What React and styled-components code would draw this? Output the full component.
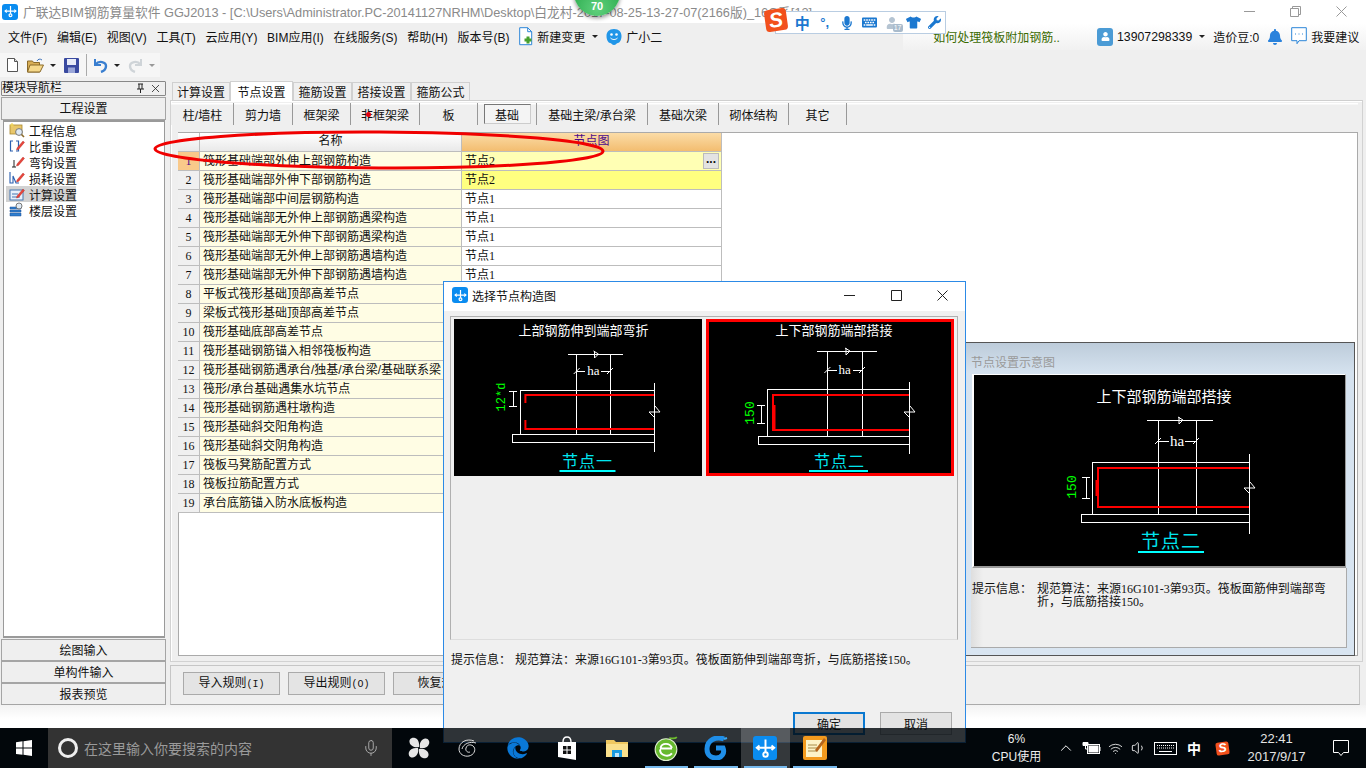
import React from 'react';
import styled, { createGlobalStyle } from 'styled-components';
import { FaMicrophone, FaKeyboard, FaTshirt, FaWrench, FaUser, FaBell, FaEdge } from 'react-icons/fa';
import { ChevronUp, Wifi, Volume1, Mic } from 'lucide-react';

const Global = createGlobalStyle`
  html, body { margin: 0; padding: 0; background: #000; overflow: hidden; }
  * { box-sizing: border-box; }
  body { font: 12px "Liberation Sans", "Noto Sans CJK SC", sans-serif; color: #111; }
`;

const Page = styled.div`
  position: relative; width: 1366px; height: 768px; overflow: hidden;
  display: flex; flex-direction: column; background: #000;
`;

/* ---------- title bar ---------- */
const TitleBar = styled.header`
  height: 23px; background: #fff; display: flex; align-items: center; padding-left: 2px; flex: none;
`;
const TitleText = styled.div`
  margin-left: 5px; color: #8a8a8a; font-size: 12.75px; white-space: nowrap; flex: 1; overflow: hidden;
`;
const WinControl = styled.div`
  width: 46px; height: 23px; display: flex; align-items: center; justify-content: center; flex: none;
  color: ${p => p.$dark ? '#222' : '#999'};
`;
const AppTile = styled.div`
  width: ${p => p.$s}px; height: ${p => p.$s}px; border-radius: 3px; background: #0a8cf0; flex: none;
  display: flex; align-items: center; justify-content: center;
`;
const AppMark = ({ s = 16 }) => (
  <AppTile $s={s}>
    <svg width={s - 3} height={s - 3} viewBox="0 0 14 14" fill="none" stroke="#fff" strokeWidth="1.3">
      <path d="M7 1v8.500M1.500 6.500h11" />
      <path d="M3 5 1.200 6.500 3 8M11 5l1.800 1.500L11 8" />
      <path d="M7 9.500c-2 0-2 3 0 3s2-3 0-3" />
    </svg>
  </AppTile>
);

/* ---------- menu ---------- */
const MenuBar = styled.nav`
  height: 27px; background: #efefef; display: flex; align-items: center; padding-left: 8px; flex: none;
`;
const MenuItem = styled.span`
  margin-right: ${p => p.$mr ?? 9.7}px; white-space: nowrap; display: inline-flex; align-items: center;
`;
const MenuSpacer = styled.div` flex: 1; `;
const Promo = styled.div`
  width: 187px; height: 27px; display: flex; align-items: center; justify-content: center;
  color: #3a6a00; background: linear-gradient(#fff, #f1f1f1);
`;
const UserArea = styled.div`
  width: 276px; height: 27px; display: flex; align-items: center; padding-left: 7px;
  background: linear-gradient(#fff, #f1f1f1); white-space: nowrap;
`;
const Avatar = styled.div`
  width: 16px; height: 18px; border-radius: 3px; background: #4b9bd5; color: #fff; font-size: 9px;
  display: flex; align-items: center; justify-content: center; margin-right: 4px;
`;
const Phone = styled.span` font-size: 12.3px; `;
const Caret = styled.i`
  display: inline-block; width: 0; height: 0; flex: none;
  border-left: ${p => p.$s ?? 3}px solid transparent; border-right: ${p => p.$s ?? 3}px solid transparent;
  border-top: ${p => p.$s ?? 3}px solid ${p => p.$c ?? '#222'};
`;
const Gap = styled.span` display: inline-block; width: ${p => p.$w}px; flex: none; `;

/* ---------- toolbar ---------- */
const Toolbar = styled.div`
  width: 160px; height: 24px; margin-top: 3px; background: #f6f6f6; display: flex; align-items: center;
  padding-left: 2px; flex: none;
`;
const ToolSlot = styled.div`
  width: ${p => p.$w}px; display: flex; justify-content: center; align-items: center; flex: none;
`;
const ToolSep = styled.div` width: 1px; height: 22px; background: #aaa; margin: 0 1.5px; flex: none; `;

/* ---------- workspace ---------- */
const Workspace = styled.div`
  height: 655px; background: #efefef; display: flex; flex-direction: column; flex: none;
`;
const Columns = styled.div`
  flex: 1; display: flex; margin-top: 4px; min-height: 0;
`;
const NavColumn = styled.aside`
  width: 165px; margin-left: 1px; display: flex; flex-direction: column; flex: none;
`;
const NavHeader = styled.div`
  height: 15px; border: 1px solid #888; border-radius: 1px; display: flex; align-items: center; padding: 0 4px 0 0;
  justify-content: space-between; line-height: 13px; font-size: 12px; margin-top: 0; background: #efefef;
`;
const NavButton = styled.div`
  height: ${p => p.$h}px; border: 1px solid #a5a5a5; background: #efefef; display: flex; align-items: center;
  justify-content: center; margin-top: ${p => p.$mt ?? 0}px; flex: none; padding-bottom: 2px;
`;
const TreeBox = styled.ul`
  list-style: none; margin: 0 1px 1px 2px; padding: 0 0 0 2px; flex: 1; background: #fff; border: 2px solid #9a9a9a;
  border-width: 2px 1px 2px 1px;
`;
const TreeRow = styled.li`
  height: 16px; display: flex; align-items: center; width: 70px; white-space: nowrap; gap: 4px; padding-left: 3px;
  background: ${p => p.$on ? '#d2d2d2' : 'transparent'};
`;

const MainColumn = styled.main`
  flex: 1; margin-left: 4px; margin-right: 3px; display: flex; flex-direction: column; min-width: 0;
`;
const Tabs = styled.div` display: flex; height: 19px; margin-left: 2px; align-items: flex-end; flex: none; `;
const Tab = styled.div`
  width: ${p => p.$w}px; height: ${p => p.$on ? 20 : 18}px; display: flex; align-items: center; justify-content: center;
  background: ${p => p.$on ? '#fff' : '#efefef'}; border: 1px solid #d0d0d0; border-bottom: 0; position: relative;
  z-index: ${p => p.$on ? 1 : 0}; margin-bottom: ${p => p.$on ? -1 : 0}px;
`;
const Panel = styled.section`
  flex: 1; border: 1px solid #d2d2d2; border-top-color: #cfcfcf; background: #efefef; display: flex; flex-direction: column;
  padding: 1px 4px 5px 7px; min-height: 0;
  box-shadow: inset 1px 1px 0 #fff;
`;
const SubTabs = styled.div`
  height: 22px; margin: 1px 0 0 -7px; padding-left: 1px; display: flex; flex: none; background: linear-gradient(#fff 0, #fff 1px, #efefef 2px);
`;
const SubTab = styled.div`
  position: relative; width: ${p => p.$w}px; height: 22px; border-right: 1px solid #999; display: flex;
  align-items: center; justify-content: center; flex: none;
`;
const SubTabActive = styled.span`
  width: 47px; height: 20px; display: flex; align-items: center; justify-content: center;
  background: #f4f4f4; border: 1px solid #777; border-right-color: #ccc; border-bottom-color: #ccc;
`;
const RedDot = styled.i`
  position: absolute; left: 15px; top: 9px; width: 5px; height: 5px; border-radius: 50%; background: #e8000b;
`;
const InnerBox = styled.div`
  flex: 1; margin-top: 7px; background: #fff; border: 1px solid #aaa; display: flex; justify-content: space-between;
  padding-right: 1px; min-height: 0;
`;
const Grid = styled.div`
  width: 544px; display: grid; grid-template-columns: 22px 262px 260px; grid-auto-rows: 19px; align-self: flex-start;
  align-content: start; margin-left: -1px;
`;
const Cell = styled.div`
  position: relative; border-right: 1px solid #bdbdbd; border-bottom: 1px solid #bdbdbd; padding: 1px 0 0 3px;
  white-space: nowrap; overflow: hidden; line-height: 17px;
  background: ${p => p.$bg ?? '#fff'}; color: ${p => p.$c ?? '#111'};
`;
const NumCell = styled(Cell)` text-align: center; padding-left: 0; `;
const HeadCell = styled(Cell)`
  text-align: center; padding: 0;
  background: ${p => p.$hot ? 'linear-gradient(#fbdca7, #f3bd70)' : 'linear-gradient(#fff, #e9e9e9)'};
`;
const EllipsisBtn = styled.div`
  position: absolute; right: 2px; top: 1px; width: 16px; height: 16px; background: #e3e3e3; border: 1px solid #bbb;
  display: flex; align-items: center; justify-content: center; font-weight: 700; line-height: 8px; padding-bottom: 5px; color: #111;
`;
const Half = styled.span` font: 12px/1 "Liberation Serif", serif; `;
const Paren = styled.span` font: 10px/1 "Liberation Mono", monospace; `;

const SchemePanel = styled.div`
  width: 391px; height: 314px; align-self: flex-end; margin: 0 1px -1px 0;
  border: 1px solid #555; border-left: 0; padding: 0 8px 0 8px; display: flex; flex-direction: column;
  background: linear-gradient(#bdccda, #d5e2ef 30px, #d9e5f1);
`;
const SchemeTitle = styled.div`
  height: 31px; padding: 10px 0 0 0; color: #9a9a9a; flex: none; margin-left: -1px;
`;
const SchemePic = styled.div`
  width: 374px; height: 194px; background: #000; border: 1px solid #fff; border-left-width: 2px; border-right: 1px solid #999; flex: none;
  margin-left: 0; border-bottom: 2px solid #999; overflow: hidden;
`;
const SchemeInfo = styled.div`
  width: 376px; height: 80px; background: linear-gradient(90deg, #dedede, #efefef 12px); border: 1px solid #aaa;
  border-width: 0 1px 1px 0; margin-left: -1px; display: flex; padding: 15px 0 0 1px; line-height: 13px;
`;
const InfoLabel = styled.span` white-space: nowrap; flex: none; margin-right: ${p => p.$mr}px; `;
const InfoBody = styled.span` width: 296px; word-break: break-all; `;
const InfoInline = styled.div` white-space: nowrap; line-height: 14px; display: flex; `;

const BottomBar = styled.footer`
  height: 40px; margin: 3px 3px 0 0; border: 1px solid #c6c6c6; border-bottom-color: #aaa; flex: none; display: flex;
  align-items: center; gap: 8px; padding: 0 0 4px 12px; background: #efefef;
`;
const RuleButton = styled.div`
  width: 97px; height: 23px; background: #e4e4e4; border: 1px solid #aaa; text-align: center; line-height: 21px;
`;
const Strip = styled.div`
  height: 23px; flex: none; background: linear-gradient(#f2f2f2, #fff 60%);
`;

/* ---------- overlays ---------- */
const Dialog = styled.div`
  position: absolute; left: 443px; top: 281px; width: 523px; height: 462px; z-index: 4; background: #f0f0f0;
  border: 1px solid #2c8ae6; display: flex; flex-direction: column;
`;
const DialogTitle = styled.div`
  height: 29px; background: #fff; display: flex; align-items: center; padding: 0 0 3px 8px; flex: none;
`;
const DialogName = styled.div` flex: 1; margin-left: 4px; `;
const ThumbList = styled.div`
  width: 508px; height: 324px; margin: 5px 0 0 6px; border: 1px solid #b0b0b0; border-bottom-color: #ddd; padding: 2px 0 0 3px;
  display: flex; gap: 4px; align-items: flex-start; flex: none; background: #efefef;
`;
const Thumb = styled.div`
  width: 248px; height: 157px; background: #000; flex: none; outline: ${p => p.$on ? '3px solid #ff0000' : '0'}; outline-offset: -3px;
`;
const DialogInfo = styled.div` margin: 13px 0 0 7px; flex: none; `;
const DialogActions = styled.div` display: flex; justify-content: flex-end; gap: 15px; margin: 45px 13px 0 0; `;
const DialogButton = styled.div`
  width: 72px; height: 23px; background: #e3e3e3; display: flex; align-items: center; justify-content: center;
  border: ${p => p.$primary ? '2px solid #0a78d0' : '1px solid #aaa'};
`;
const Ellipse = styled.svg` position: absolute; left: 150px; top: 126px; z-index: 3; pointer-events: none; `;
const Badge = styled.div`
  position: absolute; left: 574px; top: -30px; width: 46px; height: 46px; border-radius: 50%; z-index: 6;
  background: radial-gradient(circle at 50% 85%, #5fd07c, #27a84a 70%); box-shadow: 0 2px 4px rgba(0,0,0,.45);
  color: #fff; font-weight: 700; font-size: 11px; display: flex; align-items: flex-end; justify-content: center; padding-bottom: 4px;
`;
const ImeBar = styled.div`
  position: absolute; left: 775px; top: 11px; width: 171px; height: 23px; z-index: 6; background: #fff; border: 1px solid #b9cde2;
  display: flex; align-items: center; color: #1b78d0; padding-left: 15px;
`;
const ImeSlot = styled.span`
  width: ${p => p.$w ?? 22.5}px; display: flex; justify-content: center; align-items: center; flex: none; position: relative;
  color: ${p => p.$c ?? '#1b78d0'}; font-weight: ${p => p.$b ? 700 : 400}; font-size: ${p => p.$fs ?? 12}px;
`;
const ImeCount = styled.em`
  position: absolute; right: 1px; bottom: -3px; background: #a9bbcc; color: #fff; font: 7px/8px "Liberation Sans", sans-serif; padding: 0 1px; border-radius: 2px;
`;
const SogouMark = styled.div`
  width: ${p => p.$s}px; height: ${p => p.$s}px; background: #f2501c; border-radius: ${p => p.$s / 6}px; color: #fff;
  transform: rotate(-8deg); font: italic 700 ${p => p.$s * 0.95}px/${p => p.$s}px "Liberation Sans", sans-serif; text-align: center; flex: none;
`;
const ImeLogo = styled.div` position: absolute; left: 765px; top: 9px; z-index: 7; `;

/* ---------- taskbar ---------- */
const Taskbar = styled.div`
  height: 40px; flex: none; position: relative; z-index: 5; display: flex; align-items: center; color: #fff;
  background: rgba(2, 8, 14, .82);
`;
const StartBtn = styled.div` width: 48px; height: 40px; display: flex; align-items: center; justify-content: center; flex: none; `;
const SearchBox = styled.div`
  width: 344px; height: 40px; background: #333; display: flex; align-items: center; padding-left: 10px; color: #9a9a9a; font-size: 14px; flex: none;
`;
const Cortana = styled.i`
  width: 20px; height: 20px; border-radius: 50%; border: 3px solid #eee; margin-right: 6px; flex: none;
`;
const SearchText = styled.span` flex: 1; white-space: nowrap; `;
const MicWrap = styled.span` margin-right: 12px; color: #aaa; display: flex; `;
const AppRow = styled.div` display: flex; margin-left: 2px; flex: none; `;
const AppSlot = styled.div`
  position: relative; width: 49.5px; height: 40px; display: flex; align-items: center; justify-content: center;
  background: ${p => p.$current ? 'rgba(255,255,255,.2)' : 'transparent'};
  &::after {
    content: ''; display: ${p => p.$open ? 'block' : 'none'}; position: absolute; left: 3px; right: 3px; bottom: 0; height: 2px; background: #76b9ed;
  }
`;
const CpuBlock = styled.div`
  width: 70px; margin-left: 142px; text-align: center; line-height: 18px; flex: none; font-size: 12px; color: #eee;
`;
const TrayRow = styled.div` display: flex; align-items: center; margin-left: 1px; height: 40px; flex: none; `;
const TraySlot = styled.div`
  width: ${p => p.$w}px; display: flex; align-items: center; justify-content: center; flex: none; color: #fff;
  font-size: ${p => p.$fs ?? 12}px; font-weight: ${p => p.$b ? 700 : 400};
`;
const Clock = styled.div`
  width: 78px; text-align: center; line-height: 18px; font-size: 13px; color: #e4e4e4; flex: none;
`;

/* ---------- small drawings ---------- */
const Pencil = () => <path d="M8 10 14 3l1.500 1.400-6 7L7.500 12z" fill="#e8453c" stroke="#b02a22" strokeWidth=".4" />;
const I16 = ({ children }) => <svg width="16" height="16" viewBox="0 0 16 16" style={{ flex: 'none' }}>{children}</svg>;

const treeIcons = {
  info: <I16><rect x="1" y="3" width="12" height="9" fill="#e9c76b" stroke="#a8872e" strokeWidth=".8" /><circle cx="10" cy="10" r="3.400" fill="#dfeaf5" stroke="#777" /><path d="m12.500 12.500 2.500 2.500" stroke="#8a6a2a" strokeWidth="1.600" /><path d="M3 1v4M1 3h4" stroke="#f2d65a" strokeWidth="1.200" /></I16>,
  weight: <I16><path d="M4 3H1.500v10H4M7 3h2.500v10H7" fill="none" stroke="#2a5fb0" strokeWidth="1.200" /><Pencil /></I16>,
  hook: <I16><path d="M5 6v7M3 13h4" stroke="#222" strokeWidth="1" fill="none" /><Pencil /></I16>,
  loss: <I16><path d="M1 2v11h3V6l3 7h3" fill="none" stroke="#2a5fb0" strokeWidth="1.100" /><Pencil /></I16>,
  calc: <I16><rect x="1" y="4" width="13" height="10" fill="#e8f0fa" stroke="#4777b0" /><path d="M3 8h6M3 11h8" stroke="#4777b0" /><Pencil /></I16>,
  floor: <I16><path d="M1 5h11v2H1zM1 8h11v2H1zM1 11h11v3H1z" fill="#2f7fd0" stroke="#1e4f90" strokeWidth=".5" /><circle cx="10" cy="4" r="3" fill="#dfeaf5" stroke="#777" /></I16>,
};

const NewDoc = () => <svg width="11" height="14" viewBox="0 0 11 14"><path d="M.5.5h7l3 3v10H.5z" fill="#fff" stroke="#555" /><path d="M7.500.5v3h3" fill="#ddd" stroke="#555" /></svg>;
const OpenFolder = () => <svg width="17" height="15" viewBox="0 0 17 15"><path d="M.5 3h5l1 1.500h6V14H.5z" fill="#d8ae55" stroke="#8a6a2a" /><path d="M3 7h13.500L13 14H.5z" fill="#f5d88a" stroke="#8a6a2a" /><path d="M10 3c1-2 3-2.500 5-1" fill="none" stroke="#3b70b8" /></svg>;
const Floppy = () => <svg width="15" height="15" viewBox="0 0 15 15"><rect width="15" height="15" rx="1" fill="#3a4aa0" /><rect x="3" y="1" width="9" height="6" fill="#e8ecf8" /><rect x="4" y="9.500" width="7" height="5.500" fill="#9aa6d8" /></svg>;
const Undo = ({ c }) => <svg width="15" height="15" viewBox="0 0 15 15" fill="none"><path d="M2 1v6h6" stroke={c} strokeWidth="2" /><path d="M2.500 6.500C6 2 13 4 13 8c0 3-2 5-5 6" stroke={c} strokeWidth="2.400" /></svg>;
const Redo = ({ c }) => <svg width="15" height="15" viewBox="0 0 15 15" fill="none" style={{ transform: 'scaleX(-1)' }}><path d="M2 1v6h6" stroke={c} strokeWidth="2" /><path d="M2.500 6.500C6 2 13 4 13 8c0 3-2 5-5 6" stroke={c} strokeWidth="2.400" /></svg>;
const NewChange = () => <svg width="14" height="19" viewBox="0 0 14 19"><path d="M.7.7h8l4 4v13H.7z" fill="#fff" stroke="#2c86d8" /><path d="M8.700.7v4h4" fill="none" stroke="#2c86d8" /><path d="M9 9.500v7M5.500 13h7" stroke="#47a02e" strokeWidth="3" /></svg>;
const Mascot = () => <svg width="16" height="19" viewBox="0 0 16 19"><path d="M8 2c5 0 7.500 3 7.500 7s-2 7-3.500 7-2 2-4 2-2.500-2-4-2S.5 13 .5 9 3 2 8 2z" fill="#2196e8" /><circle cx="5.500" cy="7.500" r="1.300" fill="#fff" /><circle cx="10.500" cy="7.500" r="1.300" fill="#fff" /><path d="M4.500 11c2 2 5 2 7 0" stroke="#fff" fill="none" /></svg>;
const CommentIcon = () => <svg width="16" height="20" viewBox="0 0 16 20"><path d="M.7.7h14.600v13H8l-2 3v-3H.7z" fill="#fff" stroke="#2c86d8" /><path d="M4 7h1M7.500 7h1M11 7h1" stroke="#2c86d8" /></svg>;
const WindowsLogo = () => <svg width="16" height="16" viewBox="0 0 16 16" fill="#fff"><path d="M0 2.200 6.500 1.300v6.300H0zM7.500 1.200 16 0v7.600H7.500zM0 8.500h6.500v6.300L0 13.900zM7.500 8.500H16V16l-8.500-1.200z" /></svg>;
const Fan = () => <svg width="22" height="22" viewBox="0 0 22 22" fill="#e6e6e6"><path d="M11 10C7 11 2 9 1.500 5 1 1.500 4.500 0 7 1c3.500 1.200 4.500 5 4 9zM12 11c-1-4 1-9 5-9.500C20.500 1 22 4.500 21 7c-1.200 3.500-5 4.500-9 4zM11 12c4-1 9 1 9.500 5 .5 3.500-3 5-5.500 4-3.500-1.200-4.500-5-4-9zM10 11c1 4-1 9-5 9.500C1.500 21 0 17.500 1 15c1.200-3.500 5-4.500 9-4z" /></svg>;
const Swirl = () => <svg width="20" height="20" viewBox="0 0 20 20" fill="none" stroke="#ddd" strokeWidth="1"><path d="M16 3C9 0 1 4 1 11c0 5 5 8 10 7 5-1 7-6 5-9-2-3-7-3-8 1-1 3 2 5 4 4" /><path d="M18 5C12 3 5 6 4 11" /></svg>;
const StoreIcon = () => <svg width="20" height="24" viewBox="0 0 20 24"><path d="M6 6C6 2 8 1 10 1s4 1 4 5" fill="none" stroke="#fff" strokeWidth="1.400" /><path d="M1 6h18v18L1 21z" fill="#fff" /><path d="M6 10h3.500v3.500H6zM10.500 10H14v3.500h-3.500zM6 14.500h3.500V18H6zM10.500 14.500H14V18h-3.500z" fill="#111" /></svg>;
const FolderIcon = () => <svg width="22" height="18" viewBox="0 0 22 18"><path d="M0 1h8l2 2h12v15H0z" fill="#f0c860" /><path d="M0 5h22v13H0z" fill="#fbe08c" /><path d="M6 11h10v7H6z" fill="#1a9be0" /><path d="M9 14h4v4H9z" fill="#bfe6fa" /></svg>;
const GreenE = () => <svg width="24" height="25" viewBox="0 0 22 23"><circle cx="11" cy="12.500" r="10" fill="#66b92e" stroke="#dfeecf" /><path d="M5.500 11.500h11M5.500 12.500c0 6 8 7 11 3.500M6 11C7 6 14.500 6 16.500 11" fill="none" stroke="#fff" strokeWidth="1.800" /><path d="M14 2c3 0 5 1 7-1" stroke="#6dbb2e" strokeWidth="1.500" fill="none" /></svg>;
const GlodonG = () => <svg width="24" height="24" viewBox="0 0 24 24" fill="none"><path d="M20 3C12 0 3 4 3 13c0 6 4 9 9 9 6 0 9-5 7-10h-7" stroke="#1f8ee8" strokeWidth="5" /><path d="M20 3l3-1" stroke="#39a6f0" strokeWidth="2" /></svg>;
const Sticky = () => <svg width="24" height="24" viewBox="0 0 24 24"><rect width="24" height="24" rx="2" fill="#f39a1e" /><path d="M3 4h16v17H3z" fill="#fdf3c8" /><path d="M5 9h9M5 12h11M5 15h9" stroke="#a88c4a" /><path d="M12 14 21 2l2 2-9 12z" fill="#b5651d" /></svg>;
const BatteryIcon = () => <svg width="20" height="14" viewBox="0 0 20 14" fill="none" stroke="#fff"><rect x="5.500" y="3.500" width="12" height="9" /><rect x="7" y="5" width="9" height="6" fill="#fff" /><path d="M18 6v4" /><path d="M1 1.500h5v3H1z" fill="#fff" /><path d="M3.500 5v3h2" /></svg>;
const KeyboardTray = () => <svg width="23" height="13" viewBox="0 0 23 13" fill="none" stroke="#fff"><rect x=".5" y=".5" width="22" height="12" /><path d="M3 3.500h17M3 6h17" strokeDasharray="1 1" /><path d="M5 9.500h13" /></svg>;
const NoticeIcon = () => <svg width="16" height="16" viewBox="0 0 16 16" fill="none" stroke="#fff"><path d="M.5.5h15v12h-5l-2.500 3-2.500-3h-5z" /></svg>;

/* ---------- CAD diagram, drawn from data ---------- */
const thumbOne = {
  w: 248, h: 157, title: '上部钢筋伸到端部弯折', cx: 129.500, titleY: 15.500, titleSize: 13,
  top: [114, 169, 35], cols: [122.700, 156], haY: 52, haSize: 13,
  box: { l: 66, t: 71, r: 200, b: 115 }, slabL: 58, slabB: 123, cut: [64, 133], cutY: 92,
  red: ['M200 76H71.400V84', 'M71.400 101V110H200'],
  dim: { x: 59, a: 72, b: 87, tx: 47, ty: 78, label: '12*d', size: 12 },
  node: { label: '节点一', cx: 133.500, y: 148, size: 16, a: 105.500, b: 161.500, uy: 152 },
};
const thumbTwo = {
  w: 248, h: 157, title: '上下部钢筋端部搭接', cx: 128, titleY: 15.500, titleSize: 13,
  top: [111, 171, 32], cols: [121.400, 156], haY: 51, haSize: 13,
  box: { l: 61, t: 70, r: 203, b: 117 }, slabL: 52.500, slabB: 125, cut: [63, 135], cutY: 92,
  red: ['M203 76H67V111H203', 'M68.500 86V110'],
  dim: { x: 55, a: 86, b: 104, tx: 44, ty: 94, label: '150', size: 13 },
  node: { label: '节点二', cx: 133.500, y: 148, size: 16, a: 103, b: 162, uy: 152 },
};
const bigPic = {
  w: 372, h: 192, title: '上下部钢筋端部搭接', cx: 190, titleY: 27, titleSize: 15,
  top: [173, 239, 45], cols: [184, 222], haY: 66, haSize: 15,
  box: { l: 118, t: 87, r: 275, b: 139 }, slabL: 107, slabB: 147, cut: [79, 159], cutY: 112,
  red: ['M275 93H124V132H275', 'M122.500 105V121'],
  dim: { x: 112, a: 102, b: 123, tx: 98, ty: 112, label: '150', size: 13 },
  node: { label: '节点二', cx: 197, y: 173, size: 19, a: 164, b: 230, uy: 177 },
};

const Cad = ({ g }) => {
  const [c1, c2] = g.cols;
  const mid = (c1 + c2) / 2;
  const { box: b, dim: d, node: n } = g;
  const [tl, tr, ty] = g.top;
  const tm = (tl + tr) / 2;
  const cx = b.r;
  return (
    <svg width={g.w} height={g.h} viewBox={`0 0 ${g.w} ${g.h}`} style={{ display: 'block' }} fontFamily='"Noto Sans CJK SC", sans-serif'>
      <text x={g.cx} y={g.titleY} textAnchor="middle" fill="#fff" fontSize={g.titleSize}>{g.title}</text>
      <g stroke="#fff" strokeWidth="1" fill="none" shapeRendering="crispEdges">
        <path d={`M${tl} ${ty}H${tr}`} />
        <path d={`M${c1} ${ty}V${b.b}M${c2} ${ty}V${b.b}`} />
        <path d={`M${b.r} ${b.t}H${b.l}V${b.b}H${b.r}`} />
        <path d={`M${b.r} ${b.b}V${g.slabB}H${g.slabL}V${b.b}H${b.r}`} />
        <path d={`M${cx} ${g.cut[0]}V${g.cut[1]}`} />
        <path d={`M${c1} ${g.haY}H${mid - 8}M${mid + 8} ${g.haY}H${c2}`} />
        <path d={`M${d.x} ${d.a}V${d.b}M${d.x - 4} ${d.a}H${d.x + 4}M${d.x - 4} ${d.b}H${d.x + 4}`} />
      </g>
      <g stroke="#fff" strokeWidth="1" fill="none">
        <path d={`M${tm - 2} ${ty - 3}L${tm + 3} ${ty}L${tm - 1} ${ty + 4}V${ty - 3}`} />
        <path d={`M${cx - 5} ${g.cutY + 1}L${cx + 6} ${g.cutY + 1}L${cx + 1} ${g.cutY - 5}M${cx - 5} ${g.cutY + 1}L${cx} ${g.cutY + 6}`} />
        <path d={`M${c1 - 3} ${g.haY + 3}L${c1 + 3} ${g.haY - 3}M${c2 - 3} ${g.haY + 3}L${c2 + 3} ${g.haY - 3}`} />
      </g>
      <text x={mid} y={g.haY + g.haSize * 0.33} textAnchor="middle" fill="#fff" fontSize={g.haSize} fontFamily='"Liberation Serif", serif'>ha</text>
      <g stroke="#ff0000" strokeWidth="2" fill="none">
        {g.red.map(p => <path key={p} d={p} />)}
      </g>
      <text transform={`translate(${d.tx + 4} ${d.ty}) rotate(-90)`} textAnchor="middle" fill="#00ff00" fontSize={d.size} fontFamily='"Liberation Mono", monospace'>{d.label}</text>
      <text x={n.cx} y={n.y} textAnchor="middle" fill="#00e5ee" fontSize={n.size} letterSpacing="1">{n.label}</text>
      <path d={`M${n.a} ${n.uy}H${n.b}`} stroke="#00ffff" strokeWidth="2" />
    </svg>
  );
};

/* ---------- data ---------- */
const FW_COLON = '\uFF1A';
const FW_COMMA = '\uFF0C';
const menus = ['文件(F)', '编辑(E)', '视图(V)', '工具(T)', '云应用(Y)', 'BIM应用(I)', '在线服务(S)', '帮助(H)', '版本号(B)'];
const treeItems = [
  ['工程信息', 'info'], ['比重设置', 'weight'], ['弯钩设置', 'hook'], ['损耗设置', 'loss'], ['计算设置', 'calc', true], ['楼层设置', 'floor'],
];
const tabs = [['计算设置', 58], ['节点设置', 63, true], ['箍筋设置', 59], ['搭接设置', 59], ['箍筋公式', 59]];
const subTabs = [
  ['柱/墙柱', 62], ['剪力墙', 59], ['框架梁', 58], ['非框架梁', 69, false, true], ['板', 58], ['基础', 59, true],
  ['基础主梁/承台梁', 111], ['基础次梁', 71], ['砌体结构', 70], ['其它', 58],
];
const rows = [
  '筏形基础端部外伸上部钢筋构造', '筏形基础端部外伸下部钢筋构造', '筏形基础端部中间层钢筋构造', '筏形基础端部无外伸上部钢筋遇梁构造',
  '筏形基础端部无外伸下部钢筋遇梁构造', '筏形基础端部无外伸上部钢筋遇墙构造', '筏形基础端部无外伸下部钢筋遇墙构造', '平板式筏形基础顶部高差节点',
  '梁板式筏形基础顶部高差节点', '筏形基础底部高差节点', '筏形基础钢筋锚入相邻筏板构造', '筏形基础钢筋遇承台/独基/承台梁/基础联系梁',
  '筏形/承台基础遇集水坑节点', '筏形基础钢筋遇柱墩构造', '筏形基础斜交阳角构造', '筏形基础斜交阴角构造', '筏板马凳筋配置方式', '筏板拉筋配置方式', '承台底筋锚入防水底板构造',
];
const valueBg = i => (i === 0 ? '#ffffb4' : i === 1 ? '#ffff80' : '#fff');

const InfoText = () => (
  <>规范算法{FW_COLON}来源<Half>16G101-3</Half>第<Half>93</Half>页。筏板面筋伸到端部弯折{FW_COMMA}与底筋搭接<Half>150</Half>。</>
);

export default function App() {
  return (
    <Page>
      <Global />
      <TitleBar>
        <AppMark s={16} />
        <TitleText>广联达BIM钢筋算量软件 GGJ2013 - [C:\Users\Administrator.PC-20141127NRHM\Desktop\白龙村-2017-08-25-13-27-07(2166版)_16G系[12]</TitleText>
        <WinControl><svg width="11" height="11"><path d="M0 5.500h11" stroke="currentColor" /></svg></WinControl>
        <WinControl><svg width="11" height="11" fill="none" stroke="currentColor"><path d="M.5 2.500h8v8h-8zM2.500 2.500v-2h8v8h-2" /></svg></WinControl>
        <WinControl><svg width="11" height="11" stroke="currentColor"><path d="M.5.5l10 10M10.500.5l-10 10" /></svg></WinControl>
        <Gap $w={2} />
      </TitleBar>

      <MenuBar>
        {menus.map(m => <MenuItem key={m}>{m}</MenuItem>)}
        <MenuItem $mr={4}><NewChange /></MenuItem>
        <MenuItem $mr={7}>新建变更</MenuItem>
        <MenuItem $mr={8}><Caret /></MenuItem>
        <MenuItem $mr={4}><Mascot /></MenuItem>
        <MenuItem>广小二</MenuItem>
        <MenuSpacer />
        <Promo>如何处理筏板附加钢筋..</Promo>
        <UserArea>
          <Avatar><FaUser /></Avatar>
          <Phone>13907298339</Phone>
          <Gap $w={7} /><Caret /><Gap $w={8} />
          <span>造价豆:0</span>
          <Gap $w={8} /><FaBell size={16} color="#2a82dc" /><Gap $w={8} />
          <CommentIcon /><Gap $w={4} />
          <span>我要建议</span>
        </UserArea>
      </MenuBar>

      <Workspace>
        <Toolbar>
          <ToolSlot $w={21}><NewDoc /></ToolSlot>
          <ToolSlot $w={25}><OpenFolder /></ToolSlot>
          <ToolSlot $w={10}><Caret /></ToolSlot>
          <ToolSlot $w={26}><Floppy /></ToolSlot>
          <ToolSep />
          <ToolSlot $w={24}><Undo c="#3a7fd0" /></ToolSlot>
          <ToolSlot $w={10}><Caret /></ToolSlot>
          <ToolSlot $w={26}><Redo c="#cfd4d8" /></ToolSlot>
          <ToolSlot $w={8}><Caret $c="#999" /></ToolSlot>
        </Toolbar>
        <Columns>
          <NavColumn>
            <NavHeader>
              <span>模块导航栏</span>
              <svg width="26" height="11" viewBox="0 0 26 11" fill="none" stroke="#222"><path d="M3 1h5M4 1v5M7 1v5M2 6h7M5.500 6v4" /><path d="M17 2l7 7M24 2l-7 7" strokeWidth=".8" /></svg>
            </NavHeader>
            <NavButton $h={23} $mt={1}>工程设置</NavButton>
            <TreeBox>
              {treeItems.map(([t, k, on]) => (
                <TreeRow key={t} $on={on}>{treeIcons[k]}<span>{t}</span></TreeRow>
              ))}
            </TreeBox>
            <NavButton $h={22}>绘图输入</NavButton>
            <NavButton $h={22}>单构件输入</NavButton>
            <NavButton $h={22}>报表预览</NavButton>
          </NavColumn>

          <MainColumn>
            <Tabs>
              {tabs.map(([t, w, on]) => <Tab key={t} $w={w} $on={on}>{t}</Tab>)}
            </Tabs>
            <Panel>
              <SubTabs>
                {subTabs.map(([t, w, on, dot]) => (
                  <SubTab key={t} $w={w}>
                    {on ? <SubTabActive>{t}</SubTabActive> : t}
                    {dot && <RedDot />}
                  </SubTab>
                ))}
              </SubTabs>
              <InnerBox>
                <Grid>
                  <HeadCell />
                  <HeadCell>名称</HeadCell>
                  <HeadCell $hot $c="#4b0a8c">节点图</HeadCell>
                  {rows.map((name, i) => (
                    <React.Fragment key={name}>
                      <NumCell $bg={i === 0 ? '#f9c98a' : '#f0f0f0'} $c={i === 0 ? '#4b0a8c' : '#111'}><Half>{i + 1}</Half></NumCell>
                      <Cell $bg="#fffde4">{name}</Cell>
                      <Cell $bg={valueBg(i)}>
                        节点<Half>{i < 2 ? 2 : 1}</Half>
                        {i === 0 && <EllipsisBtn>...</EllipsisBtn>}
                      </Cell>
                    </React.Fragment>
                  ))}
                </Grid>
                <SchemePanel>
                  <SchemeTitle>节点设置示意图</SchemeTitle>
                  <SchemePic><Cad g={bigPic} /></SchemePic>
                  <SchemeInfo>
                    <InfoLabel $mr={5}>提示信息{FW_COLON}</InfoLabel>
                    <InfoBody><InfoText /></InfoBody>
                  </SchemeInfo>
                </SchemePanel>
              </InnerBox>
            </Panel>
            <BottomBar>
              <RuleButton>导入规则<Paren>(I)</Paren></RuleButton>
              <RuleButton>导出规则<Paren>(O)</Paren></RuleButton>
              <RuleButton>恢复规则</RuleButton>
            </BottomBar>
          </MainColumn>
        </Columns>
      </Workspace>
      <Strip />

      <Taskbar>
        <StartBtn><WindowsLogo /></StartBtn>
        <SearchBox>
          <Cortana />
          <SearchText>在这里输入你要搜索的内容</SearchText>
          <MicWrap><Mic size={18} strokeWidth={1.3} /></MicWrap>
        </SearchBox>
        <AppRow>
          <AppSlot><Fan /></AppSlot>
          <AppSlot><Swirl /></AppSlot>
          <AppSlot><FaEdge size={22} color="#0a78d7" /></AppSlot>
          <AppSlot><StoreIcon /></AppSlot>
          <AppSlot><FolderIcon /></AppSlot>
          <AppSlot $open><GreenE /></AppSlot>
          <AppSlot $open><GlodonG /></AppSlot>
          <AppSlot $open $current><AppMark s={24} /></AppSlot>
          <AppSlot $open><Sticky /></AppSlot>
        </AppRow>
        <CpuBlock>6%<br />CPU使用</CpuBlock>
        <TrayRow>
          <TraySlot $w={27}><ChevronUp size={18} strokeWidth={1.3} /></TraySlot>
          <TraySlot $w={24}><BatteryIcon /></TraySlot>
          <TraySlot $w={24}><Wifi size={15} strokeWidth={1.3} /></TraySlot>
          <TraySlot $w={23}><Volume1 size={16} strokeWidth={1.3} /></TraySlot>
          <TraySlot $w={30}><KeyboardTray /></TraySlot>
          <TraySlot $w={27} $fs={14} $b>中</TraySlot>
          <TraySlot $w={30}><SogouMark $s={13}>S</SogouMark></TraySlot>
          <Clock>22:41<br />2017/9/17</Clock>
          <TraySlot $w={51}><NoticeIcon /></TraySlot>
        </TrayRow>
      </Taskbar>

      <Ellipse width="470" height="50" viewBox="0 0 470 50">
        <ellipse cx="229" cy="24" rx="224" ry="18" fill="none" stroke="#f00000" strokeWidth="3" transform="rotate(0.3 229 24)" />
      </Ellipse>

      <Dialog>
        <DialogTitle>
          <AppMark s={16} />
          <DialogName>选择节点构造图</DialogName>
          <WinControl $dark><svg width="12" height="12"><path d="M0 6.500h11" stroke="currentColor" /></svg></WinControl>
          <WinControl $dark><svg width="11" height="11" fill="none" stroke="currentColor"><path d="M.5.5h10v10H.5z" /></svg></WinControl>
          <WinControl $dark><svg width="11" height="11" stroke="currentColor"><path d="M.5.5l10 10M10.500.5l-10 10" /></svg></WinControl>
        </DialogTitle>
        <ThumbList>
          <Thumb><Cad g={thumbOne} /></Thumb>
          <Thumb $on><Cad g={thumbTwo} /></Thumb>
        </ThumbList>
        <DialogInfo>
          <InfoInline>
            <InfoLabel $mr={4}>提示信息{FW_COLON}</InfoLabel>
            <span><InfoText /></span>
          </InfoInline>
        </DialogInfo>
        <DialogActions>
          <DialogButton $primary>确定</DialogButton>
          <DialogButton>取消</DialogButton>
        </DialogActions>
      </Dialog>

      <Badge>70</Badge>
      <ImeBar>
        <ImeSlot $fs={15} $b>中</ImeSlot>
        <ImeSlot $fs={13} $b>°,</ImeSlot>
        <ImeSlot><FaMicrophone size={14} /></ImeSlot>
        <ImeSlot><FaKeyboard size={15} /></ImeSlot>
        <ImeSlot $c="#b5c4d2"><FaUser size={12} /><ImeCount>17</ImeCount></ImeSlot>
        <ImeSlot $w={20}><FaTshirt size={15} /></ImeSlot>
        <ImeSlot $w={22}><FaWrench size={13} /></ImeSlot>
      </ImeBar>
      <ImeLogo><SogouMark $s={22}>S</SogouMark></ImeLogo>
    </Page>
  );
}
